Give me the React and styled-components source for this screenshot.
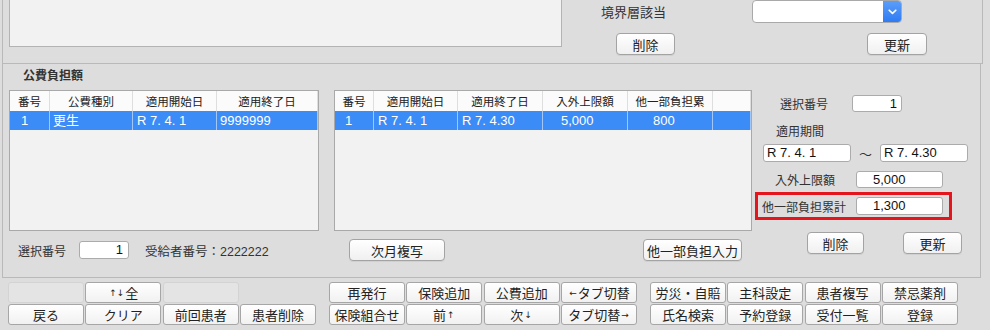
import styled, { createGlobalStyle } from 'styled-components'

const GlobalStyle = createGlobalStyle`
  html, body {
    margin: 0;
    padding: 0;
    background: #dddddd;
  }
  body {
    font-family: "Liberation Sans", "Noto Sans CJK JP", sans-serif;
    color: #222;
  }
`

const Screen = styled.div`
  width: 990px;
  height: 330px;
  overflow: hidden;
  background: #dddddd;
  font-size: 13px;
`

const TopSection = styled.div`
  display: flex;
  margin-left: 2px;
  width: 979px;
  height: 63px;
  border: 1px solid #b9b9b9;
  border-top: none;
`

const MemoBox = styled.div`
  margin-left: 6px;
  width: 553px;
  height: 47px;
  box-sizing: border-box;
  background: #f2f2f2;
  border: 1px solid #b3b3b3;
  border-top: none;
`

const TopRight = styled.div`
  flex: 1;
  display: flex;
  flex-direction: column;
`

const Row = styled.div`
  display: flex;
  align-items: center;
  height: ${p => p.$h}px;
  margin-top: ${p => p.$mt || 0}px;
  padding-left: ${p => p.$pl || 0}px;
`

const Label = styled.div`
  width: ${p => (p.$w ? `${p.$w}px` : 'auto')};
  padding-left: ${p => p.$pl || 0}px;
  margin-right: ${p => p.$mr || 0}px;
  box-sizing: border-box;
  font-size: ${p => p.$fs || 12}px;
  font-weight: ${p => (p.$bold ? 'bold' : 'normal')};
  color: #333;
  white-space: nowrap;
`

const Select = styled.div`
  display: flex;
  width: 150px;
  height: 23px;
  box-sizing: border-box;
  background: #fff;
  border: 1px solid #a9a9a9;
  border-radius: 4px;
  overflow: hidden;
`

const SelectArrow = styled.div`
  margin-left: auto;
  width: 18px;
  display: flex;
  align-items: center;
  justify-content: center;
  background: linear-gradient(#5b9ef9, #2e7bf4);
`

const Button = styled.button`
  width: ${p => p.$w}px;
  height: 22px;
  margin-left: ${p => p.$ml || 0}px;
  padding: 0;
  box-sizing: border-box;
  font-family: inherit;
  font-size: 13px;
  color: #222;
  background: linear-gradient(#ffffff, #f0f0f0);
  border: 1px solid #a3a3a3;
  border-radius: 4px;
  box-shadow: 0 1px 0 rgba(0, 0, 0, 0.06);
  white-space: nowrap;
`

const FundSection = styled.div`
  margin-left: 2px;
  width: 977px;
  height: 213px;
  border: 1px solid #b9b9b9;
  border-top: none;
`

const SectionTitle = styled.div`
  padding: 4px 0 0 20px;
  height: 16px;
  line-height: 16px;
  font-size: 12px;
  font-weight: bold;
  color: #333;
`

const FundBody = styled.div`
  display: flex;
  margin-top: 6px;
  padding-left: 6px;
`

const Column = styled.div`
  display: flex;
  flex-direction: column;
  width: ${p => (p.$w ? `${p.$w}px` : 'auto')};
  flex: ${p => (p.$w ? 'none' : 1)};
  margin-left: ${p => p.$ml || 0}px;
`

const Table = styled.div`
  width: ${p => p.$w}px;
  height: 141px;
  box-sizing: border-box;
  background: #f2f2f2;
  border: 1px solid #a9a9a9;
`

const HeadRow = styled.div`
  display: grid;
  grid-template-columns: ${p => p.$cols};
  height: 20px;
  background: #fbfbfb;
`

const HeadCell = styled.div`
  display: flex;
  align-items: center;
  justify-content: center;
  border-right: 1px solid #dedede;
  font-size: 11.5px;
  color: #222;
  white-space: nowrap;
`

const DataRow = styled.div`
  display: grid;
  grid-template-columns: ${p => p.$cols};
  height: 19px;
  background: #3b8cf7;
  color: #fff;
`

const DataCell = styled.div`
  padding-left: ${p => p.$pad || 0}px;
  border-right: 1px solid #a3c7f8;
  font-size: 13px;
  line-height: 19px;
  white-space: nowrap;
  overflow: hidden;
`

const Input = styled.div`
  width: ${p => p.$w}px;
  height: ${p => p.$h || 18}px;
  box-sizing: border-box;
  padding: 0 ${p => p.$pr || 3}px 0 ${p => p.$pl || 3}px;
  text-align: ${p => p.$align || 'left'};
  font-size: 13px;
  line-height: ${p => (p.$h || 18) - 2}px;
  color: #111;
  background: #fff;
  border: 1px solid #ababab;
  border-radius: 3px;
  white-space: nowrap;
`

const FooterRow = styled.div`
  display: flex;
  align-items: center;
  justify-content: ${p => p.$justify || 'flex-start'};
  margin-top: 8px;
  height: 22px;
  padding: 0 ${p => p.$pr || 0}px 0 ${p => p.$pl || 0}px;
`

const InfoText = styled.div`
  margin-left: 16px;
  font-size: 12.5px;
  color: #333;
  white-space: nowrap;
`

const Tilde = styled.div`
  width: 29px;
  text-align: center;
  font-size: 13px;
  color: #333;
`

const Highlight = styled.div`
  display: flex;
  align-items: center;
  margin: 4px 0 0 3px;
  width: 197px;
  height: 28px;
  box-sizing: border-box;
  padding-left: 4px;
  border: 3px solid #e4151d;
`

const Toolbar = styled.div`
  display: flex;
  gap: 13px;
  margin-top: 4px;
  padding-left: 8px;
`

const ToolGroup = styled.div`
  display: grid;
  grid-template-columns: repeat(4, 76px);
  grid-auto-rows: 21px;
  column-gap: 1.33px;
  row-gap: 1px;
`

const ToolButton = styled.div`
  display: flex;
  align-items: center;
  justify-content: center;
  box-sizing: border-box;
  font-size: 13px;
  color: #222;
  white-space: nowrap;
  border-radius: 3px;
  border: 1px solid ${p => (p.$blank ? '#d3d3d3' : '#a6a6a6')};
  background: ${p => (p.$blank ? '#e4e4e4' : 'linear-gradient(#ffffff, #f1f1f1)')};
  visibility: ${p => (p.$none ? 'hidden' : 'visible')};
`

const Arrow = styled.span`
  font-family: "DejaVu Sans", sans-serif;
  font-size: 9px;
  margin: 0 1px;
`

const leftCols = '40px 83px 84px 1fr'
const midCols = '39px 84px 85px 85px 85px 1fr'

const Chevron = () => (
  <svg width="9" height="6" viewBox="0 0 9 6">
    <path d="M1.2 1.2 L4.5 4.4 L7.8 1.2" fill="none" stroke="#fff" strokeWidth="1.6" strokeLinecap="round" strokeLinejoin="round" />
  </svg>
)

const tools = [
  [
    { blank: true }, { label: <><Arrow>↑↓</Arrow>全</> }, { blank: true }, { none: true },
    { label: '戻る' }, { label: 'クリア' }, { label: '前回患者' }, { label: '患者削除' },
  ],
  [
    { label: '再発行' }, { label: '保険追加' }, { label: '公費追加' }, { label: <><Arrow>←</Arrow>タブ切替</> },
    { label: '保険組合せ' }, { label: <>前<Arrow>↑</Arrow></> }, { label: <>次<Arrow>↓</Arrow></> }, { label: <>タブ切替<Arrow>→</Arrow></> },
  ],
  [
    { label: '労災・自賠' }, { label: '主科設定' }, { label: '患者複写' }, { label: '禁忌薬剤' },
    { label: '氏名検索' }, { label: '予約登録' }, { label: '受付一覧' }, { label: '登録' },
  ],
]

const App = () => {
  return (
    <Screen>
      <GlobalStyle />

      <TopSection>
        <MemoBox />
        <TopRight>
          <Row $h={23} $pl={39}>
            <Label $w={151} $fs={13}>境界層該当</Label>
            <Select>
              <SelectArrow>
                <Chevron />
              </SelectArrow>
            </Select>
          </Row>
          <Row $h={22} $mt={10} $pl={54}>
            <Button $w={59}>削除</Button>
            <Button $w={60} $ml={192}>更新</Button>
          </Row>
        </TopRight>
      </TopSection>

      <FundSection>
        <SectionTitle>公費負担額</SectionTitle>

        <FundBody>
          <Column $w={310}>
            <Table $w={310}>
              <HeadRow $cols={leftCols}>
                <HeadCell>番号</HeadCell>
                <HeadCell>公費種別</HeadCell>
                <HeadCell>適用開始日</HeadCell>
                <HeadCell>適用終了日</HeadCell>
              </HeadRow>
              <DataRow $cols={leftCols}>
                <DataCell $pad={11}>1</DataCell>
                <DataCell $pad={3}>更生</DataCell>
                <DataCell $pad={4}>R 7. 4. 1</DataCell>
                <DataCell $pad={3}>9999999</DataCell>
              </DataRow>
            </Table>
            <FooterRow $pl={9}>
              <Label $w={48}>選択番号</Label>
              <Input $w={50} $align="right" $pr={5} style={{ marginLeft: 13 }}>1</Input>
              <InfoText>受給者番号：2222222</InfoText>
            </FooterRow>
          </Column>

          <Column $w={418} $ml={15}>
            <Table $w={418}>
              <HeadRow $cols={midCols}>
                <HeadCell>番号</HeadCell>
                <HeadCell>適用開始日</HeadCell>
                <HeadCell>適用終了日</HeadCell>
                <HeadCell>入外上限額</HeadCell>
                <HeadCell>他一部負担累</HeadCell>
                <HeadCell />
              </HeadRow>
              <DataRow $cols={midCols}>
                <DataCell $pad={10}>1</DataCell>
                <DataCell $pad={4}>R 7. 4. 1</DataCell>
                <DataCell $pad={4}>R 7. 4.30</DataCell>
                <DataCell $pad={18}>5,000</DataCell>
                <DataCell $pad={25}>800</DataCell>
                <DataCell />
              </DataRow>
            </Table>
            <FooterRow $justify="space-between" $pl={15} $pr={10}>
              <Button $w={96}>次月複写</Button>
              <Button $w={99}>他一部負担入力</Button>
            </FooterRow>
          </Column>

          <Column>
            <Row $h={17} $mt={5}>
              <Label $w={100} $pl={28}>選択番号</Label>
              <Input $w={50} $h={17} $align="right" $pr={4}>1</Input>
            </Row>
            <Row $h={18} $mt={9}>
              <Label $pl={24}>適用期間</Label>
            </Row>
            <Row $h={18} $mt={5} $pl={11}>
              <Input $w={88}>R 7. 4. 1</Input>
              <Tilde>〜</Tilde>
              <Input $w={88}>R 7. 4.30</Input>
            </Row>
            <Row $h={17} $mt={9}>
              <Label $w={104} $pl={23}>入外上限額</Label>
              <Input $w={87} $h={17} $pl={16}>5,000</Input>
            </Row>
            <Highlight>
              <Label $w={94}>他一部負担累計</Label>
              <Input $w={87} $pl={16}>1,300</Input>
            </Highlight>
            <Row $h={22} $mt={12} $pl={55}>
              <Button $w={57}>削除</Button>
              <Button $w={59} $ml={39}>更新</Button>
            </Row>
          </Column>
        </FundBody>
      </FundSection>

      <Toolbar>
        {tools.map((group, gi) => (
          <ToolGroup key={gi}>
            {group.map((t, i) => (
              <ToolButton key={i} $blank={t.blank} $none={t.none}>
                {t.label}
              </ToolButton>
            ))}
          </ToolGroup>
        ))}
      </Toolbar>
    </Screen>
  )
}

export default App
